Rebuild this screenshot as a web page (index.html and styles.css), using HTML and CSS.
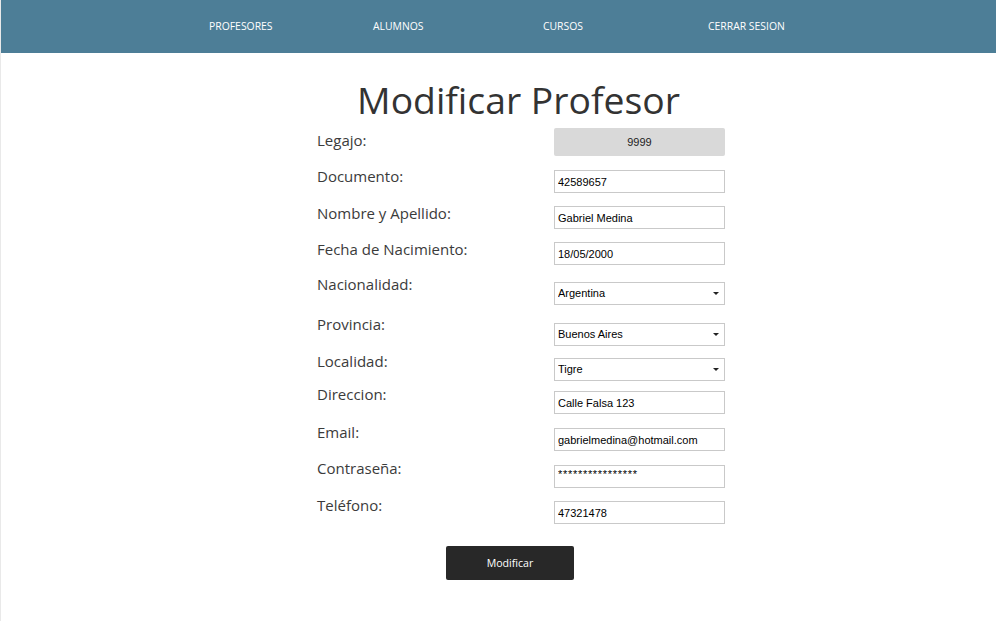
FILE: index.html
```html
<!DOCTYPE html>
<html lang="es">
<head>
<meta charset="utf-8">
<title>Modificar Profesor</title>
<link rel="stylesheet" href="styles.css">
</head>
<body>
<div class="page">
  <nav class="nav">
    <ul class="nav-list">
      <li class="nav-item nav-item--1"><a href="#">PROFESORES</a></li>
      <li class="nav-item nav-item--2"><a href="#">ALUMNOS</a></li>
      <li class="nav-item nav-item--3"><a href="#">CURSOS</a></li>
      <li class="nav-item"><a href="#">CERRAR SESION</a></li>
    </ul>
  </nav>

  <main class="content">
    <h1 class="title">Modificar Profesor</h1>
    <form class="form">
      <label class="lbl lbl--first">Legajo:</label>
      <div class="legajo">9999</div>

      <label class="lbl lbl--a">Documento:</label>
      <input class="field" type="text" value="42589657">

      <label class="lbl lbl--b">Nombre y Apellido:</label>
      <input class="field" type="text" value="Gabriel Medina">

      <label class="lbl lbl--b">Fecha de Nacimiento:</label>
      <input class="field" type="text" value="18/05/2000">

      <label class="lbl lbl--sel">Nacionalidad:</label>
      <span class="select"><select><option>Argentina</option></select></span>

      <label class="lbl lbl--sel2">Provincia:</label>
      <span class="select"><select><option>Buenos Aires</option></select></span>

      <label class="lbl lbl--c">Localidad:</label>
      <span class="select"><select><option>Tigre</option></select></span>

      <label class="lbl lbl--c">Direccion:</label>
      <input class="field" type="text" value="Calle Falsa 123">

      <label class="lbl lbl--d">Email:</label>
      <input class="field" type="text" value="gabrielmedina@hotmail.com">

      <label class="lbl lbl--c">Contraseña:</label>
      <input class="field field--pass" type="text" value="****************">

      <label class="lbl lbl--d">Teléfono:</label>
      <input class="field" type="text" value="47321478">

      <div class="actions">
        <button class="btn" type="button">Modificar</button>
      </div>
    </form>
  </main>
</div>
</body>
</html>
```

FILE: styles.css
```css
* { box-sizing: border-box; }

html, body {
  margin: 0;
  padding: 0;
  background: #ffffff;
}

body {
  font-family: "Open Sans", "Liberation Sans", sans-serif;
  color: #333333;
}

.page {
  min-height: 100vh;
  border-left: 1px solid #e9e9e9;
}

/* NAV */
.nav {
  background: #4d7e97;
  height: 53px;
}

.nav-list {
  list-style: none;
  margin: 0;
  padding: 0 0 0 208px;
  display: flex;
  height: 53px;
  align-items: flex-start;
}

.nav-item {
  font-size: 10.4px;
  line-height: 52px;
}

.nav-item--1 { width: 164px; }
.nav-item--2 { width: 170px; }
.nav-item--3 { width: 165px; }

.nav-item a {
  color: #ffffff;
  text-decoration: none;
}

/* CONTENT */
.content {
  padding-left: 316px;
}

.title {
  width: 403px;
  height: 49px;
  margin: 23px 0 0 0;
  text-align: center;
  font-size: 37.3px;
  font-weight: 400;
  line-height: 48px;
  color: #333333;
  white-space: nowrap;
}

.form {
  margin-top: 3px;
  display: grid;
  grid-template-columns: 237px 171px;
  grid-template-rows: 42px 36px 36px 40px 41px 35px 33px 37px 37px 36px 45px auto;
}

.lbl {
  align-self: start;
  font-size: 15px;
  line-height: 20px;
  color: #3b3b3b;
}

.lbl--first { margin-top: 2px; }
.lbl--a { margin-top: -4px; }
.lbl--b { margin-top: -3px; }
.lbl--c { margin-top: -7px; }
.lbl--d { margin-top: -6px; }
.lbl--sel { margin-top: -8px; }
.lbl--sel2 { margin-top: -9px; }

.legajo {
  align-self: start;
  height: 28px;
  background: #d9d9d9;
  border-radius: 2px;
  font-family: "Liberation Sans", Arial, sans-serif;
  font-size: 11px;
  color: #222222;
  display: flex;
  align-items: center;
  justify-content: center;
}

.field {
  align-self: start;
  width: 171px;
  height: 23px;
  margin: 0;
  padding: 0 3px;
  border: 1px solid #c9c9c9;
  border-radius: 0;
  background: #ffffff;
  font-family: "Liberation Sans", Arial, sans-serif;
  font-size: 11px;
  color: #000000;
  outline: none;
}

.field--pass {
  padding-bottom: 6px;
  letter-spacing: 0.7px;
}

.select {
  align-self: start;
  position: relative;
  display: block;
  width: 171px;
  height: 23px;
}

.select select {
  -webkit-appearance: none;
  appearance: none;
  display: block;
  width: 100%;
  height: 23px;
  margin: 0;
  padding: 0 3px 1px;
  border: 1px solid #c9c9c9;
  border-radius: 0;
  background: #ffffff;
  font-family: "Liberation Sans", Arial, sans-serif;
  font-size: 11px;
  color: #000000;
  outline: none;
}

.select::after {
  content: "";
  position: absolute;
  right: 6px;
  top: 10px;
  border-left: 3px solid transparent;
  border-right: 3px solid transparent;
  border-top: 3px solid #222222;
  pointer-events: none;
}

.actions {
  grid-column: 1 / span 2;
  padding-left: 129px;
}

.btn {
  display: block;
  width: 128px;
  height: 34px;
  border: none;
  border-radius: 2px;
  background: #282828;
  color: #ffffff;
  font-family: "Open Sans", "Liberation Sans", sans-serif;
  font-size: 10.6px;
  cursor: pointer;
}
```
